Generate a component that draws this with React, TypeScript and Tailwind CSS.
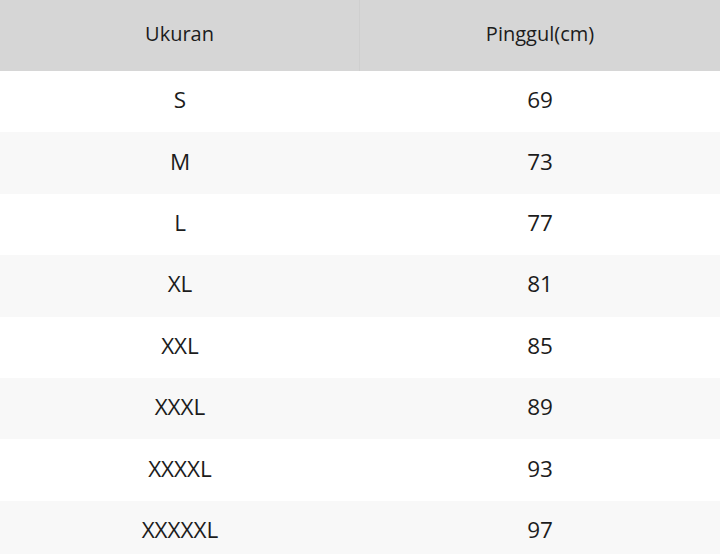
import React from 'react';

const rows: [string, string][] = [
  ['S', '69'],
  ['M', '73'],
  ['L', '77'],
  ['XL', '81'],
  ['XXL', '85'],
  ['XXXL', '89'],
  ['XXXXL', '93'],
  ['XXXXXL', '97'],
];

export default function App() {
  return (
    <div className="w-[720px] h-[554px] overflow-hidden bg-white text-[#1c1c1c] font-['Open_Sans','Noto_Sans',sans-serif]">
      {/* Header */}
      <div className="grid grid-cols-2 h-[71px] bg-[#d6d6d6] text-[20px]">
        <div className="flex items-center justify-center pb-[3px] border-r border-[#cfcfcf]">Ukuran</div>
        <div className="flex items-center justify-center pb-[3px]">Pinggul(cm)</div>
      </div>
      {rows.map(([size, hip], i) => (
        <div
          key={size}
          className={`grid grid-cols-2 h-[61.4px] text-[22.5px] ${i % 2 === 1 ? 'bg-[#f8f8f8]' : 'bg-white'}`}
        >
          <div className="flex items-center justify-center pb-[3px]">{size}</div>
          <div className="flex items-center justify-center pb-[3px]">{hip}</div>
        </div>
      ))}
    </div>
  );
}
